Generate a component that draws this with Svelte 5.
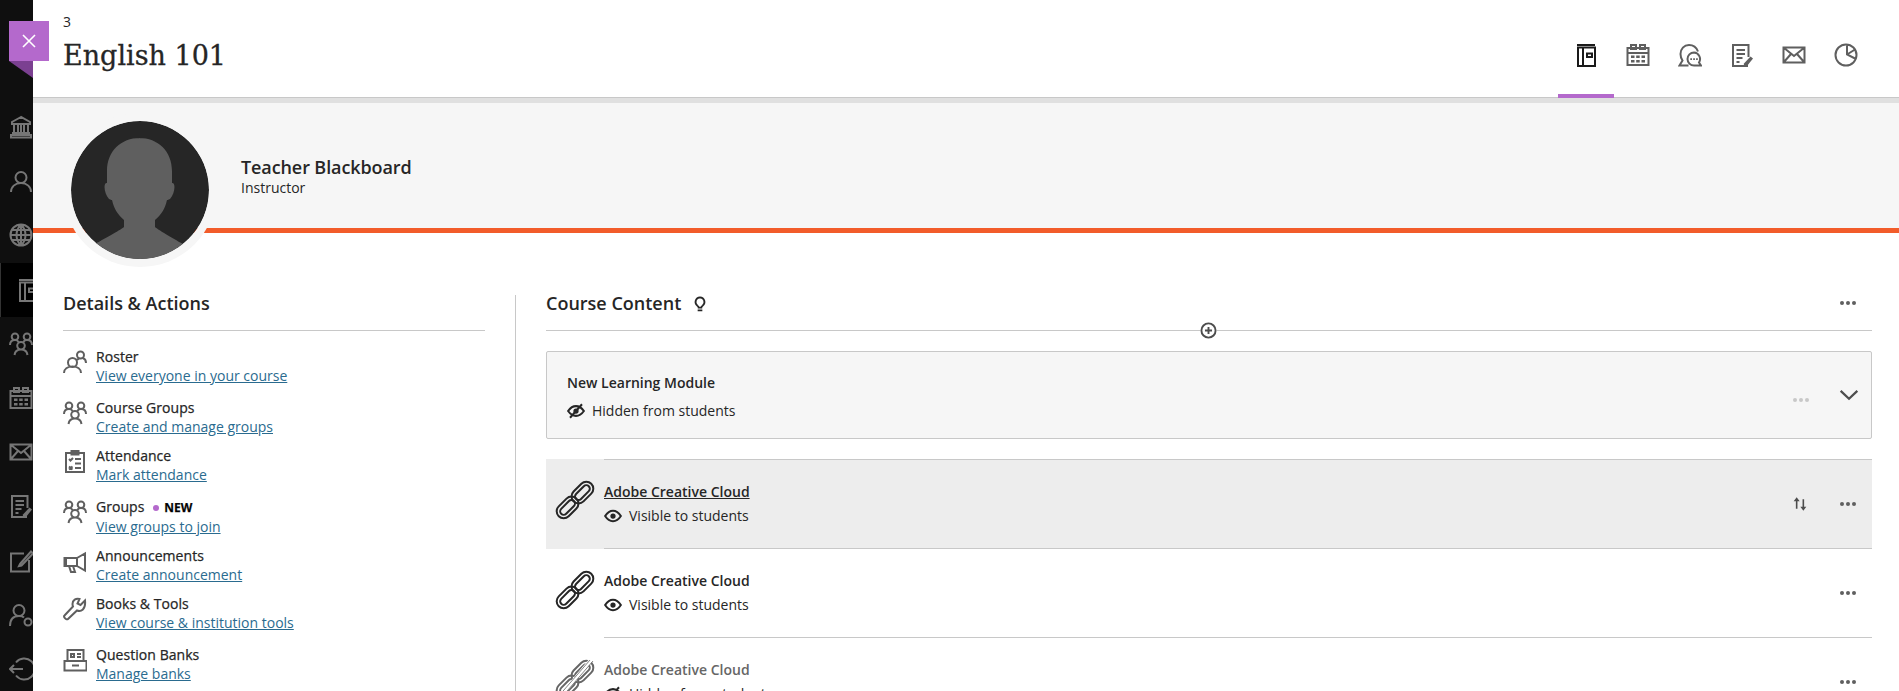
<script>
    const icons = {
        bank: { s: 'M12 2 3 7v2h18V7zM5 9v9M9 9v9M12 9v9M15 9v9M19 9v9M4 18h16v2H4zM2 20h20v2.500H2z' },
        person: { s: 'M12 3a5.500 5.500 0 1 0 0 11 5.500 5.500 0 0 0 0-11zM2 23c0-5 4-9 10-9s10 4 10 9' },
        globe: { s: 'M12 1.500a10.500 10.500 0 1 0 0 21 10.500 10.500 0 0 0 0-21zM1.500 12h21M3 7h18M3 17h18M12 1.500c-6 6-6 15 0 21M12 1.500c6 6 6 15 0 21M12 1.500v21' },
        book: { s: 'M3 2h18M4 4.500h17V23H4zM9 4.500V23M13 10.500h5v3.500h-5z' },
        roster: { s: 'M9.500 8a4.500 4.500 0 1 0 0 9 4.500 4.500 0 0 0 0-9zM1 23c0-4 3.500-6.500 8.500-6.500S18 19 18 23M17.500 1.500a3.500 3.500 0 1 0 0 7 3.500 3.500 0 0 0 0-7zM16 8.500c-1 .8-2 1.500-3 2M20 8c2 .8 3 2.500 3 5' },
        groups: { s: 'M6 1.500a3.300 3.300 0 1 0 0 6.600 3.300 3.300 0 0 0 0-6.600zM18 1.500a3.300 3.300 0 1 0 0 6.600 3.300 3.300 0 0 0 0-6.600zM12 10a3.800 3.800 0 1 0 0 7.600 3.800 3.800 0 0 0 0-7.600zM1 13c0-3 2-5 5-5 2 0 3 .8 3.500 2M23 13c0-3-2-5-5-5-2 0-3 .8-3.500 2M5.500 23c.5-3.500 3-5.400 6.500-5.400s6 1.900 6.500 5.400' },
        calendar: {
            s: 'M1.500 5h21v17h-21zM1.500 10h21M5 2h5v4H5zM14 2h5v4h-5z',
            f: 'M5 12.500h3.500V15H5zM10.200 12.500h3.500V15h-3.500zM15.500 12.500H19V15h-3.500zM5 17h3.500v2.500H5zM10.200 17h3.500v2.500h-3.500zM15.500 17H19v2.500h-3.500z'
        },
        chat: {
            s: 'M20 8.500C18.500 4.500 15 2 11 2 6 2 2.500 6 2.500 11c0 3 1 5 2 6.500l-3 5h9M16 9.500a6.500 6.500 0 1 0 0 13h7l-2-3a6.500 6.500 0 0 0-5-10z',
            f: 'M12.300 15.200h1.700v1.700h-1.700zM15.200 15.200h1.700v1.700h-1.700zM18.100 15.200h1.700v1.700h-1.700z'
        },
        notes: {
            s: 'M18.500 14V2H3v21h15M6.500 7h8.500M6.500 11h8.500M6.500 15h6M6.500 19h3',
            f: 'm20.500 13.500 2.500 2-6 7.500-3.500 1 .5-3.500z'
        },
        mail: { s: 'M1.500 4.500h21v15h-21zM1.500 4.500 12 13 22.500 4.500M1.500 19.500 9 11M22.500 19.500 15 11' },
        chart: { s: 'M12 1.500a10.500 10.500 0 1 0 0 21 10.500 10.500 0 0 0 0-21zM13 2v9.500L22 16M13 11.500l8-5' },
        edit: { s: 'M15 4.500H2v18h18V11M11 15l11-12.500 2 2L12.500 16.500 10 17z' },
        usergear: { s: 'M10 2a5.500 5.500 0 1 0 0 11 5.500 5.500 0 0 0 0-11zM1 23c0-6 3-10 9-10 2 0 4 .5 5 1.500M19 15.500a3.500 3.500 0 1 0 0 7 3.500 3.500 0 0 0 0-7z' },
        logout: { s: 'M7 5.500a10.500 10.500 0 1 1 0 13M1 12h13M5 8l-4 4 4 4' },
        attendance: {
            s: 'M3 4h18v19H3zM8.500 2h7v3.500h-7zM12 10h6M12 14.500h6M12 19h6M6 10l1.500 1.500L10 9M6 17.500l3.500 3M9.500 17.500l-3.500 3'
        },
        megaphone: {
            s: 'M1.500 9H14v8H1.500zM3 9v8M14 9l8-4.500v17L14 17M6 17l2 6h4l-2-6'
        },
        wrench: {
            s: 'M22 3.500 17.500 8 14.500 6.500 16.500 2C13 1 9.500 3 9.500 7c0 1 .3 2 .5 2.500L1.500 18.500c-1.500 1.500 2 5 3.500 3.500L14 13.500c4 1.500 9-1 8-10z'
        },
        banks: { s: 'M4.500 2h16v11h-16zM1.500 13h22v9.500h-22zM8 6h3v3H8zM14 6h4M14 9h4M9 17.500h7' },
        bulb: { s: 'M12 2a7 7 0 0 0-4 12.500c1.500 1 2 2 2 3h4c0-1 .5-2 2-3A7 7 0 0 0 12 2zM8.500 21.500h7' },
        eye: { s: 'M1.500 12S6 5 12 5s10.500 7 10.500 7S18 19 12 19 1.500 12 1.500 12z', f: 'M12 8.500a3.500 3.500 0 1 0 0 7 3.500 3.500 0 0 0 0-7z' },
        eyeoff: { s: 'M1.500 12S6 5.500 12 5.500 22.500 12 22.500 12 18 18.500 12 18.500 1.500 12 1.500 12zM20 3 4 21', f: 'M12 8.500a3.500 3.500 0 1 0 0 7 3.500 3.500 0 0 0 0-7z' },
        chevron: { s: 'M2 7l10 9.500L22 7' },
        sort: { f: 'M7 2 11.500 8H8.200v11H5.800V8H2.500zM15.800 5h2.400v11h3.300L17 22l-4.500-6h3.300z' },
        plus: { s: 'M12 2a10 10 0 1 0 0 20 10 10 0 0 0 0-20zM12 7v10M7 12h10' }
    };

    const navIcons = ['bank', 'person', 'globe', 'book', 'groups', 'calendar', 'mail', 'notes', 'edit', 'usergear', 'logout'];
    const tabs = ['book', 'calendar', 'chat', 'notes', 'mail', 'chart'];

    const details = [
        { icon: 'roster', label: 'Roster', link: 'View everyone in your course', h: 51 },
        { icon: 'groups', label: 'Course Groups', link: 'Create and manage groups', h: 48 },
        { icon: 'attendance', label: 'Attendance', link: 'Mark attendance', h: 51 },
        { icon: 'groups', label: 'Groups', link: 'View groups to join', h: 49, isNew: true },
        { icon: 'megaphone', label: 'Announcements', link: 'Create announcement', h: 48 },
        { icon: 'wrench', label: 'Books & Tools', link: 'View course & institution tools', h: 51 },
        { icon: 'banks', label: 'Question Banks', link: 'Manage banks', h: 50 }
    ];

    const rows = [
        { hidden: false, hover: true },
        { hidden: false, hover: false },
        { hidden: true, hover: false }
    ];
</script>

{#snippet icon(name, size = 24)}
    <svg class="ico" width={size} height={size} viewBox="0 0 24 24">
        {#if icons[name].s}<path d={icons[name].s} fill="none" stroke="currentColor" stroke-width={size < 24 ? 2.7 : 2} />{/if}
        {#if icons[name].f}<path d={icons[name].f} fill="currentColor" />{/if}
    </svg>
{/snippet}

{#snippet dots(faint = false)}
    <span class="dots" class:faint><i></i><i></i><i></i></span>
{/snippet}

{#snippet chain(hidden)}
    <svg class="chain" class:off={hidden} width="38" height="38" viewBox="0 0 38 38" fill="none" stroke="currentColor" stroke-width="2">
        <g transform="rotate(-45 19 19)">
            <rect x="17" y="12" width="25" height="14" rx="7" />
            <rect x="20.500" y="15.500" width="18" height="7" rx="3.500" />
            <rect x="-4" y="12" width="25" height="14" rx="7" />
            <rect x="-.5" y="15.500" width="18" height="7" rx="3.500" />
        </g>
        {#if hidden}<path d="M3 38 35 0" stroke="#fff" stroke-width="4" /><path d="M1 38 34 0M5 38 37 1" stroke-width=".8" />{/if}
    </svg>
{/snippet}

<div class="page">
    <nav class="sidenav">
        {#each navIcons as name}
            <div class="navitem" class:active={name === 'book'}>{@render icon(name)}</div>
        {/each}
    </nav>

    <div class="panel">
        <button class="close" aria-label="Close">
            <svg width="16" height="16" viewBox="0 0 16 16"><path d="M2 2l12 12M14 2 2 14" stroke="#fff" stroke-width="1.600" /></svg>
        </button>
        <div class="fold"></div>

        <header class="top">
            <div class="titles">
                <div class="count">3</div>
                <h1>English 101</h1>
            </div>
            <div class="tabs">
                {#each tabs as name, i}
                    <div class="tab" class:current={i === 0}>{@render icon(name)}</div>
                {/each}
            </div>
        </header>

        <section class="strip">
            <svg class="avatar" width="138" height="138" viewBox="0 0 138 138">
                <circle cx="69" cy="69" r="69" fill="#262626" />
                <path
                    fill="#5f5f5f"
                    d="M69 17C50 17 36 30 36 50v12c-4-1-3 11 2 16 2 1 3 1 3 1 2 9 6 15 12 20v7c-2 2-18 11-29 17l9 9c10 5 23 6 36 6 14 0 27-2 40-9l3-6c-11-6-26-15-28-17v-7c6-5 10-11 12-20 0 0 1 0 3-1 5-5 6-17 2-16V50c0-20-14-33-33-33z"
                />
            </svg>
            <div class="who">
                <div class="name">Teacher Blackboard</div>
                <div class="role">Instructor</div>
            </div>
        </section>

        <main class="content">
            <aside class="left">
                <h2 class="head">Details &amp; Actions</h2>
                <ul>
                    {#each details as d}
                        <li style="height: {d.h}px">
                            <span class="licon">{@render icon(d.icon, 24)}</span>
                            <div>
                                <div class="label">
                                    {d.label}
                                    {#if d.isNew}<span class="newdot"></span><b>NEW</b>{/if}
                                </div>
                                <a href="#top">{d.link}</a>
                            </div>
                        </li>
                    {/each}
                </ul>
            </aside>

            <div class="divider"></div>

            <section class="right">
                <div class="head righthead">
                    <h2>Course Content</h2>
                    <span class="bulb">{@render icon('bulb', 16)}</span>
                    <span class="spacer"></span>
                    {@render dots()}
                    <span class="addline">{@render icon('plus', 17)}</span>
                </div>

                <div class="module">
                    <div>
                        <div class="rowtitle">New Learning Module</div>
                        <div class="vis">{@render icon('eyeoff', 18)}<span>Hidden from students</span></div>
                    </div>
                    <span class="spacer"></span>
                    <span class="moduledots">{@render dots(true)}</span>
                    <span class="chev">{@render icon('chevron', 20)}</span>
                </div>

                {#each rows as r}
                    <div class="row" class:hover={r.hover} class:hid={r.hidden}>
                        <div class="rowicon">{@render chain(r.hidden)}</div>
                        <div class="rowbody">
                            <div>
                                <div class="rowtitle">{#if r.hover}<u>Adobe Creative Cloud</u>{:else}Adobe Creative Cloud{/if}</div>
                                <div class="vis">
                                    {@render icon(r.hidden ? 'eyeoff' : 'eye', 18)}<span>{r.hidden ? 'Hidden from students' : 'Visible to students'}</span>
                                </div>
                            </div>
                            <span class="spacer"></span>
                            {#if r.hover}<span class="sort">{@render icon('sort', 16)}</span>{/if}
                            {@render dots()}
                        </div>
                    </div>
                {/each}
            </section>
        </main>
    </div>
</div>

<style>
    :global(body) {
        margin: 0;
        overflow: hidden;
    }

    .page {
        display: flex;
        height: 691px;
        overflow: hidden;
        font-family: "Open Sans", sans-serif;
        font-size: 14px;
        color: #262626;
    }

    .ico {
        display: block;
        flex: none;
    }

    .sidenav {
        width: 33px;
        flex: none;
        padding-top: 100px;
        background: #0f0f0f;
        overflow: hidden;
    }

    .navitem {
        height: 54.200px;
        padding-left: 9px;
        display: flex;
        align-items: center;
        color: #767676;
        box-sizing: border-box;
    }

    .navitem.active {
        background: #000;
        padding-left: 15px;
        border-left: 1px solid #333;
    }

    .panel {
        flex: 1;
        position: relative;
        background: #fff;
        min-width: 0;
    }

    .close {
        position: absolute;
        left: -24px;
        top: 21px;
        width: 40px;
        height: 40px;
        padding: 0;
        border: 0;
        background: #b469cc;
        display: flex;
        align-items: center;
        justify-content: center;
        z-index: 3;
    }

    .fold {
        position: absolute;
        left: -24px;
        top: 61px;
        width: 0;
        height: 0;
        border-top: 17px solid #7b4091;
        border-left: 24px solid transparent;
        z-index: 3;
    }

    .top {
        height: 97px;
        display: flex;
        justify-content: space-between;
        padding-left: 30px;
        border-bottom: 1px solid #c8c8c8;
        position: relative;
    }

    .count {
        margin-top: 14px;
        line-height: 16px;
        font-size: 14px;
    }

    h1 {
        margin: 7px 0 0;
        font-family: "DejaVu Serif", serif;
        font-size: 27px;
        font-weight: 400;
        line-height: 38px;
        -webkit-text-stroke: 0.3px #262626;
    }

    .tabs {
        display: flex;
        margin-right: 27px;
    }

    .tab {
        width: 52px;
        height: 97px;
        display: flex;
        justify-content: center;
        padding-top: 43px;
        box-sizing: border-box;
        color: #5f5f5f;
        position: relative;
    }

    .tab.current {
        color: #1a1a1a;
    }

    .tab.current::after {
        content: "";
        position: absolute;
        left: -2px;
        right: -2px;
        bottom: -1px;
        height: 4px;
        background: #b469cc;
    }

    .strip {
        height: 125px;
        box-sizing: content-box;
        border-top: 5px solid #e0e0e0;
        border-bottom: 5px solid #f25c2a;
        background: #f6f6f6;
        display: flex;
        padding-left: 38px;
        padding-top: 0;
        position: relative;
    }

    .avatar {
        margin-top: 18px;
        flex: none;
        border-radius: 50%;
        box-shadow: 0 0 0 8px #f6f6f6;
        position: relative;
        z-index: 2;
    }

    .who {
        margin-left: 32px;
        padding-top: 52px;
    }

    .name {
        font-size: 18px;
        font-weight: 600;
        line-height: 24px;
        letter-spacing: -0.1px;
    }

    .role {
        font-size: 14px;
        line-height: 17px;
    }

    .content {
        display: flex;
        padding: 57px 27px 0 30px;
    }

    .left {
        width: 422px;
        flex: none;
    }

    .divider {
        width: 1px;
        flex: none;
        margin: 5px 30px 0;
        background: #c8c8c8;
        height: 500px;
    }

    .right {
        flex: 1;
        min-width: 0;
    }

    h2 {
        margin: 0;
        padding-top: 1px;
        font-size: 18px;
        font-weight: 600;
        line-height: 24px;
    }

    .head {
        height: 40px;
        box-sizing: content-box;
        border-bottom: 1px solid #c8c8c8;
    }

    h2.head {
        padding-top: 1px;
        height: 39px;
    }

    ul {
        list-style: none;
        margin: 16px 0 0;
        padding: 0;
    }

    li {
        display: flex;
        gap: 9px;
    }

    .licon {
        color: #5f5f5f;
        padding-top: 3px;
    }

    .label {
        line-height: 20px;
        -webkit-text-stroke: 0.25px #262626;
        letter-spacing: 0.05px;
    }

    .label b {
        font-size: 12px;
        font-weight: 700;
        color: #000;
    }

    .newdot {
        display: inline-block;
        width: 6px;
        height: 6px;
        margin: 0 5px 1px 5px;
        border-radius: 50%;
        background: #b469cc;
    }

    a {
        display: block;
        margin-top: -1px;
        line-height: 19px;
        color: #2a6b8f;
        text-decoration: underline;
    }

    .righthead {
        display: flex;
        align-items: flex-start;
        position: relative;
    }

    .bulb {
        margin: 6px 0 0 11px;
    }

    .spacer {
        flex: 1;
    }

    .dots {
        display: inline-flex;
        gap: 2px;
        flex: none;
    }

    .righthead .dots {
        margin: 11px 16px 0 0;
    }

    .dots i {
        width: 4px;
        height: 4px;
        border-radius: 50%;
        background: #5f5f5f;
    }

    .dots.faint i {
        background: #c8c8c8;
    }

    .addline {
        position: absolute;
        left: 654px;
        top: 32px;
        background: #fff;
        border-radius: 50%;
        color: #4d4d4d;
    }

    .module {
        margin-top: 20px;
        height: 88px;
        box-sizing: border-box;
        border: 1px solid #c8c8c8;
        border-radius: 2px;
        background: #f6f6f6;
        display: flex;
        align-items: center;
        padding: 3px 12px 0 20px;
    }

    .moduledots {
        margin-right: 30px;
    }

    .chev {
        color: #4d4d4d;
        margin-top: -3px;
    }

    .rowtitle {
        font-weight: 600;
        line-height: 24px;
    }

    .vis {
        display: flex;
        align-items: center;
        gap: 7px;
        line-height: 24px;
        margin-top: 4px;
    }

    .row {
        display: flex;
        height: 89px;
    }

    .row.hover {
        height: 90px;
        background: #ededed;
    }

    .module + .row {
        margin-top: 20px;
    }

    .rowicon {
        width: 58px;
        flex: none;
        padding: 22px 0 0 10px;
        box-sizing: border-box;
        color: #262626;
    }

    .chain {
        display: block;
        overflow: visible;
    }

    .chain.off {
        color: #666;
    }

    .rowbody {
        flex: 1;
        display: flex;
        align-items: center;
        border-bottom: 1px solid #c8c8c8;
        padding-right: 16px;
        box-sizing: border-box;
    }

    .row.hover .rowbody {
        border-top: 1px solid #c8c8c8;
    }

    .row .vis {
        margin-top: 0;
    }

    .row.hid .rowtitle {
        color: #666;
    }

    .sort {
        color: #4d4d4d;
        margin-right: 32px;
    }
</style>
